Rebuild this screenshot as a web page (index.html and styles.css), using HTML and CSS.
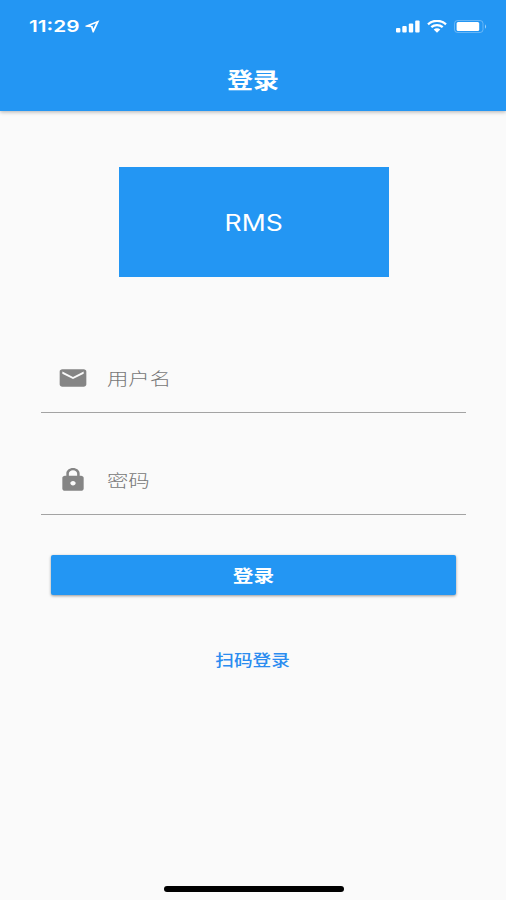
FILE: index.html
```html
<!DOCTYPE html>
<html lang="zh-CN">
<head>
    <meta charset="UTF-8">
    <title>登录</title>
    <link rel="stylesheet" href="styles.css">
</head>
<body>
    <header class="header">
        <div class="status-bar">
            <div class="status-left">
                <span class="time">11:29</span>
                <svg class="location" width="15" height="13" viewBox="0 0 15 13">
                    <path fill-rule="evenodd" d="M14.4 .2 L.3 5.7 L.5 6.7 L6 7.3 L7.6 12.6 L8.7 12.6 Z M11 3.3 L8.3 8.700 L7.600 5.900 L5.300 5.500 Z" fill="#fff"/>
                </svg>
            </div>
            <div class="status-right">
                <svg width="24" height="13" viewBox="0 0 24 13" fill="#fff">
                    <rect x="0" y="8" width="4.4" height="4.500" rx="1"/>
                    <rect x="6.3" y="6" width="4.4" height="6.500" rx="1"/>
                    <rect x="12.8" y="3.4" width="4.4" height="9.100" rx="1"/>
                    <rect x="19.2" y="0.500" width="4.4" height="12" rx="1"/>
                </svg>
                <svg class="wifi" width="20" height="13" viewBox="0 0 20 13">
                    <path d="M1 4.3 C6-.3 14-.3 19 4.3 M4.3 7.2 C7.6 4.3 12.4 4.3 15.7 7.2" fill="none" stroke="#fff" stroke-width="2.3"/>
                    <path d="M6.7 9.4 C8.6 7.9 11.4 7.9 13.3 9.4 L10 12.8 Z" fill="#fff"/>
                </svg>
                <svg class="battery" width="34" height="13" viewBox="0 0 34 13">
                    <rect x=".5" y=".5" width="28.5" height="12" rx="3" fill="none" stroke="#fff" stroke-opacity=".3"/>
                    <rect x="2.6" y="2" width="22.6" height="9" rx="1.5" fill="#fff"/>
                    <path d="M31 4.2 Q33.2 6.5 31 8.8 Z" fill="#fff" fill-opacity=".55"/>
                </svg>
            </div>
        </div>
        <h1 class="title"><span class="wide">登录</span></h1>
    </header>

    <main class="content">
        <div class="logo"><span class="wide">RMS</span></div>

        <form class="form">
            <label class="field">
                <svg class="icon" width="32" height="26" viewBox="0 0 24 24" preserveAspectRatio="none">
                    <path d="M20 4H4c-1.100 0-1.990.9-1.990 2L2 18c0 1.100.9 2 2 2h16c1.100 0 2-.9 2-2V6c0-1.100-.9-2-2-2zm0 4l-8 5-8-5V6l8 5 8-5v2z"/>
                </svg>
                <span class="placeholder">用户名</span>
            </label>
            <label class="field">
                <svg class="icon" width="32" height="26" viewBox="0 0 24 24" preserveAspectRatio="none">
                    <path d="M18 8h-1V6c0-2.760-2.240-5-5-5S7 3.240 7 6v2H6c-1.100 0-2 .9-2 2v10c0 1.100.9 2 2 2h12c1.100 0 2-.9 2-2V10c0-1.100-.9-2-2-2zm-6 9c-1.100 0-2-.9-2-2s.9-2 2-2 2 .9 2 2-.9 2-2 2zm3.100-9H8.900V6c0-1.710 1.390-3.100 3.100-3.100s3.100 1.390 3.100 3.100v2z"/>
                </svg>
                <span class="placeholder">密码</span>
            </label>
            <button class="submit" type="button"><span class="wide">登录</span></button>
        </form>

        <a class="scan"><span class="wide">扫码登录</span></a>
    </main>

    <div class="home-indicator"></div>
</body>
</html>
```
FILE: styles.css
```css
* {
    box-sizing: border-box;
}
body {
    margin: 0;
    height: 900px;
    display: flex;
    flex-direction: column;
    background: #fafafa;
    font-family: Inter, "Noto Sans CJK SC", sans-serif;
    overflow: hidden;
}
.wide {
    display: inline-block;
    transform: scaleX(1.18);
}
.header {
    height: 111px;
    background: #2396f3;
    color: #fff;
    box-shadow: 0 1px 4px rgba(0, 0, 0, 0.3);
}
.status-bar {
    height: 52px;
    padding: 0 18px 0 29px;
    display: flex;
    align-items: center;
    justify-content: space-between;
}
.status-left,
.status-right {
    display: flex;
    align-items: center;
}
.time {
    width: 56px;
    font-size: 16.5px;
    font-weight: 600;
    line-height: 20px;
    transform: scaleX(1.26);
    transform-origin: left;
}
.wifi {
    margin-left: 7px;
}
.battery {
    margin-left: 7px;
}
.title {
    margin: 0;
    height: 56px;
    font-size: 22px;
    font-weight: 700;
    line-height: 56px;
    text-align: center;
}
.content {
    flex: 1;
    display: flex;
    flex-direction: column;
    align-items: center;
    padding-top: 56px;
}
.logo {
    width: 270px;
    height: 110px;
    margin-left: 1px;
    background: #2396f3;
    color: #fff;
    font-size: 22.5px;
    line-height: 111px;
    text-align: center;
}
.form {
    width: 425px;
    margin-top: 68px;
}
.field {
    display: flex;
    align-items: center;
    height: 68px;
    padding-left: 16px;
    padding-bottom: 1px;
    border-bottom: 1px solid #a3a3a3;
}
.field + .field {
    margin-top: 34px;
}
.icon {
    fill: #858585;
}
.placeholder {
    margin: -2px 0 0 18px;
    color: #777;
    font-size: 17.5px;
    font-weight: 300;
    transform: scaleX(1.22);
    transform-origin: left;
}
.submit {
    display: block;
    width: 405px;
    height: 40px;
    margin: 40px auto 0;
    padding: 0 0 2px;
    border: none;
    border-radius: 2px;
    background: #2396f3;
    color: #fff;
    font-family: inherit;
    font-size: 17.5px;
    font-weight: 700;
    box-shadow: 0 1px 3px rgba(0, 0, 0, 0.4);
}
.scan {
    margin-top: 54px;
    color: #2a8cf0;
    font-size: 15.8px;
    font-weight: 500;
    line-height: 24px;
}
.home-indicator {
    width: 180px;
    height: 6px;
    margin: 0 162px 8px 164px;
    border-radius: 3px;
    background: #000;
}
```
